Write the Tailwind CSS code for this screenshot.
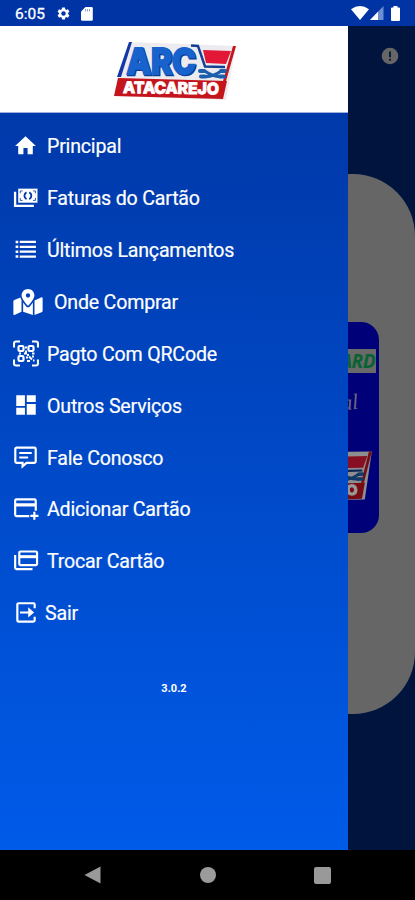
<!DOCTYPE html>
<html lang="pt-BR">
<head>
<meta charset="utf-8">
<title>ARC Atacarejo</title>
<script src="https://cdn.jsdelivr.net/npm/@tailwindcss/browser@4"></script>
</head>
<body class="bg-black">
<svg class="hidden">
  <defs>
    <symbol id="logo" viewBox="0 0 124 60">
      <path d="M16 1 L123 5 L113 59 L1 55 L5 37Z" fill="#ececf0"/>
      <path d="M16 1h3L8 36H4z" fill="#1238a8"/>
      <path d="M120 5h3L113 40h-3z" fill="#c4141c"/>
      <path d="M5 37 L114 40 L110 58 L1 55Z" fill="#c4141c"/>
      <g font-family="Inter, sans-serif" font-weight="800">
        <text x="14.500" y="34.300" font-size="35" textLength="69" lengthAdjust="spacingAndGlyphs" fill="#0a3c98" stroke="#0a3c98" stroke-width="2.500">ARC</text>
        <text x="13.500" y="32.500" font-size="35" textLength="69" lengthAdjust="spacingAndGlyphs" fill="#1762cc" stroke="#1762cc" stroke-width="2">ARC</text>
      </g>
      <path d="M90 9 L118 10 L113 23 L93 22Z" fill="#e31837"/>
      <path d="M78 4.500 L85 5 L92 25.500 L112 26" fill="none" stroke="#123f91" stroke-width="2.400"/>
      <path d="M91 29.500 Q100 36 108 35.500 M109 29.500 Q100 36 92 35.500" fill="none" stroke="#1c5fac" stroke-width="3.200"/>
      <path d="M87 30h4M108 30h4M88 35.500h4M107 35.500h4" stroke="#1c5fac" stroke-width="4" stroke-linecap="round"/>
      <text x="10" y="52" font-family="Inter, sans-serif" font-weight="800" font-size="16" textLength="96" lengthAdjust="spacingAndGlyphs" fill="#fff" stroke="#fff" stroke-width=".9" transform="rotate(.8 10 52)">ATACAREJO</text>
    </symbol>
  </defs>
</svg>
<div class="relative w-[415px] h-[900px] overflow-hidden flex flex-col bg-black font-[Roboto,sans-serif] text-white">
  <header class="h-[26px] shrink-0 bg-[#0033a3] flex items-center pl-[15px] pr-[10px]">
    <span class="text-[15.5px] leading-[26px] pt-[2px] w-[42px] [-webkit-text-stroke:0.3px_white]">6:05</span>
    <svg class="w-[15px] h-[15px] mt-[1px] -ml-px" viewBox="0 0 24 24" fill="#fff"><path d="M19.14 12.94c.04-.3.06-.61.06-.94s-.02-.64-.07-.94l2.03-1.58a.49.49 0 0 0 .12-.61l-1.92-3.32a.49.49 0 0 0-.59-.22l-2.39.96c-.5-.38-1.03-.7-1.62-.94l-.36-2.54a.48.48 0 0 0-.48-.41h-3.84c-.24 0-.43.17-.47.41l-.36 2.54c-.59.24-1.13.57-1.62.94l-2.39-.96a.48.48 0 0 0-.59.22L2.74 8.87c-.12.21-.08.47.12.61l2.03 1.58c-.05.3-.09.63-.09.94s.02.64.07.94l-2.03 1.58a.49.49 0 0 0-.12.61l1.92 3.32c.12.22.37.29.59.22l2.39-.96c.5.38 1.03.7 1.62.94l.36 2.54c.05.24.24.41.48.41h3.84c.24 0 .44-.17.47-.41l.36-2.54c.59-.24 1.13-.56 1.62-.94l2.39.96c.22.08.47 0 .59-.22l1.92-3.32a.49.49 0 0 0-.12-.61zM12 15.6a3.6 3.6 0 1 1 0-7.2 3.6 3.6 0 0 1 0 7.2z"/></svg>
    <svg class="w-[12px] h-[14px] ml-[10px] mt-px" viewBox="0 0 12 14"><path d="M4.500 0H10.500a1.300 1.300 0 0 1 1.300 1.300V12.500a1.300 1.300 0 0 1-1.300 1.300H1.300A1.300 1.300 0 0 1 0 12.500V4.500z" fill="#fff"/><path d="M4.500 2v2.500M6.500 2v2.500M8.500 2v2.500" stroke="#8da4dc"/></svg>
    <div class="grow"></div>
    <svg class="w-[18px] h-[14px]" viewBox="0 0 19 14" preserveAspectRatio="none"><path d="M0 3.200Q9.500-3 19 3.200L9.500 14z" fill="#fff"/></svg>
    <svg class="w-[14px] h-[14px] ml-[1px]" viewBox="0 0 14 14"><path d="M13.500 0v14H0z" fill="#6f8fd3"/><path d="M8 5.700V14H0z" fill="#fff"/></svg>
    <svg class="w-[9px] h-[15px] ml-[7px] mr-[5px]" viewBox="0 0 9 15"><path d="M2.500 0h4v1.500H8a1 1 0 0 1 1 1V14a1 1 0 0 1-1 1H1a1 1 0 0 1-1-1V2.500a1 1 0 0 1 1-1h1.500z" fill="#fff"/></svg>
  </header>
  <div class="flex h-[824px] shrink-0">
    <aside class="w-[348px] shrink-0 flex flex-col bg-linear-to-b from-[#0035a2] to-[#005be9]">
      <div class="h-[87px] shrink-0 bg-white border-b border-[#9faedb] flex pl-[113px] pt-[15px]">
        <svg class="w-[124px] h-[60px]"><use href="#logo"/></svg>
      </div>
      <nav class="pt-[7px] text-[19.6px] tracking-[-0.010em] leading-[26px] [-webkit-text-stroke:0.2px_white]">
        <a class="flex items-center h-[51.9px] pl-[13px]"><svg class="w-[25px] h-[25px] mr-[9px]" viewBox="0 0 24 24" fill="#fff"><path d="M10 20.500v-6h4v6h5v-8h3L12 3 2 12.500h3v8z"/></svg><span class="pt-[2.5px]">Principal</span></a>
        <a class="flex items-center h-[51.9px] pl-[13px]"><svg class="w-[25px] h-[25px] mr-[9px]" viewBox="0 0 24 24" fill="none"><path d="M5 3.500h18.500v13.500H5z" fill="#fff"/><path d="M13 7a3.700 3.700 0 0 0 0 6.600M15.600 7a3.700 3.700 0 0 1 0 6.600" stroke="#0039ac" stroke-width="1.800"/><path d="M7 8V5.700h2.200M21.500 8V5.700h-2.200M7 12.500v2.300h2.200M21.500 12.500v2.300h-2.200" stroke="#0039ac" stroke-width=".8"/><path d="M2 6.500v13.500h18" stroke="#fff" stroke-width="2.200"/></svg><span class="pt-[2.5px]">Faturas do Cartão</span></a>
        <a class="flex items-center h-[51.9px] pl-[13px]"><svg class="w-[25px] h-[25px] mr-[9px]" viewBox="0 0 24 24" fill="#fff"><path d="M2.500 3.500h2.600v2.400H2.500zM2.500 8.200h2.600v2.400H2.500zM2.500 12.900h2.600v2.400H2.500zM2.500 17.600h2.600V20H2.500zM6.500 3.600h15.500v2.200H6.500zM6.500 8.300h15.500v2.200H6.500zM6.500 13h15.500v2.200H6.500zM6.500 17.700h15.500v2.200H6.500z"/></svg><span class="pt-[2.5px]">Últimos Lançamentos</span></a>
        <a class="flex items-center h-[51.9px] pl-[13px]"><svg class="w-[30px] h-[26px] mr-[11px]" viewBox="0 0 576 512" fill="#fff"><path d="M288 0c-69.590 0-126 56.410-126 126 0 56.260 82.350 158.800 113.900 196.020 6.390 7.540 17.820 7.540 24.200 0C331.650 284.800 414 182.260 414 126 414 56.410 357.590 0 288 0zm0 168c-23.200 0-42-18.800-42-42s18.800-42 42-42 42 18.800 42 42-18.800 42-42 42zM20.120 215.950A32.006 32.006 0 0 0 0 245.660v250.320c0 11.320 11.430 19.060 21.940 14.860L160 448V214.920c-8.840-15.980-16.070-31.540-21.250-46.420zM288 359.670c-14.070 0-27.380-6.180-36.510-16.960-19.660-23.200-40.570-49.620-59.490-76.720v182l192 64V266c-18.920 27.090-39.820 53.520-59.490 76.720-9.130 10.770-22.440 16.950-36.510 16.950zm266.060-198.510L416 224v288l139.880-55.950A31.996 31.996 0 0 0 576 426.340V176.020c0-11.320-11.430-19.060-21.940-14.860z"/></svg><span class="pt-[2.5px]">Onde Comprar</span></a>
        <a class="flex items-center h-[51.9px] pl-[13px]"><svg class="w-[26px] h-[27px] mr-[8px] -mt-px" viewBox="0 0 26 26" fill="none" stroke="#fff"><path d="M1 7V3a2 2 0 0 1 2-2h4M19 1h4a2 2 0 0 1 2 2v4M1 19v4a2 2 0 0 0 2 2h4M19 25h4a2 2 0 0 0 2-2v-4" stroke-width="2.100"/><rect x="5.500" y="5.500" width="5" height="5" rx="1.200" stroke-width="2.200"/><rect x="15.500" y="5.500" width="5" height="5" rx="1.200" stroke-width="2.200"/><rect x="5.500" y="15.500" width="5" height="5" rx="1.200" stroke-width="2.200"/><path d="M13 6v2M13 10v3h-2M6 13h2M14 14.500h2M19 13h2.500M13 17h2M16 16l3 3M20 15v2M14 20.500h3M20 20h1.500" stroke-width="2"/></svg><span class="pt-[2.5px]">Pagto Com QRCode</span></a>
        <a class="flex items-center h-[51.9px] pl-[13px]"><svg class="w-[26px] h-[26px] mr-[8px]" viewBox="0 0 24 24" fill="#fff"><path d="M3 13h8V3H3zm0 8h8v-6.500H3zm9.700 0H21V11h-8.300zm0-18v6.200H21V3z"/></svg><span class="pt-[2.5px]">Outros Serviços</span></a>
        <a class="flex items-center h-[51.9px] pl-[13px]"><svg class="w-[25px] h-[25px] mr-[9px]" viewBox="0 0 24 24" fill="none" stroke="#fff" stroke-width="2.100"><path d="M3.500 2.500h17a1.300 1.300 0 0 1 1.300 1.300v12a1.300 1.300 0 0 1-1.300 1.300H13L9.200 20.500v-3.400H3.500a1.300 1.300 0 0 1-1.300-1.300v-12a1.300 1.300 0 0 1 1.300-1.300z"/><path d="M6 7.700h12M6 11.900h8.500" stroke-width="1.900"/></svg><span class="pt-[2.5px]">Fale Conosco</span></a>
        <a class="flex items-center h-[51.9px] pl-[13px]"><svg class="w-[26px] h-[26px] mr-[8px]" viewBox="0 0 24 24" fill="none" stroke="#fff" stroke-width="2"><path d="M15 18.500H3.200A1.200 1.200 0 0 1 2 17.300V4.300a1.200 1.200 0 0 1 1.200-1.200h16.600A1.200 1.200 0 0 1 21 4.300V13.500"/><path d="M2 8.200h19" stroke-width="3"/><path d="M19.700 14.500V22M16 18.300h7.500"/></svg><span class="pt-[2.5px]">Adicionar Cartão</span></a>
        <a class="flex items-center h-[51.9px] pl-[13px]"><svg class="w-[26px] h-[26px] mr-[8px]" viewBox="0 0 24 24" fill="none" stroke="#fff" stroke-width="2"><path d="M7 3.200h14a1.200 1.200 0 0 1 1.200 1.200v10.200a1.200 1.200 0 0 1-1.200 1.200H7a1.200 1.200 0 0 1-1.200-1.200V4.400A1.200 1.200 0 0 1 7 3.200z"/><path d="M6 8h16" stroke-width="2.800"/><path d="M2 6.500v11.700a1.300 1.300 0 0 0 1.300 1.300H18"/></svg><span class="pt-[2.5px]">Trocar Cartão</span></a>
        <a class="flex items-center h-[51.9px] pl-[13px]"><svg class="w-[26px] h-[26px] mr-[6px]" viewBox="0 0 24 24" fill="none" stroke="#fff" stroke-width="2"><path d="M20 7.500V4.200a1.200 1.200 0 0 0-1.200-1.200H5.200A1.200 1.200 0 0 0 4 4.200v14.600A1.200 1.200 0 0 0 5.200 20h13.600a1.200 1.200 0 0 0 1.200-1.200v-3.300M6.500 11.500h11" /><path d="M14 6.800l5.500 4.700-5.500 4.700z" fill="#fff" stroke="none"/></svg><span class="pt-[2.5px]">Sair</span></a>
      </nav>
      <p class="mt-[42px] text-center text-[11px] leading-[16px] font-bold">3.0.2</p>
    </aside>
    <main class="relative grow bg-[#00143e] border-l border-[#000c2c]/40">
      <svg class="absolute left-[32px] top-[21px] w-[18px] h-[18px]" viewBox="0 0 18 18"><circle cx="9" cy="9" r="8.300" fill="#666"/><path d="M9 4.500v5.700M9 11.700v2" stroke="#00143e" stroke-width="1.800"/></svg>
      <section class="absolute right-0 top-[148px] w-[415px] h-[540px] rounded-[62px] bg-[#666] [clip-path:inset(0_0_0_348px)]">
        <div class="absolute right-[36px] top-[148px] w-[343px] h-[211px] rounded-[18px] bg-[#000078] overflow-hidden">
          <div class="absolute right-[3px] top-[27px] w-[120px] h-[24px] bg-[#696969] text-right pr-[1px] text-[19px] tracking-[-0.5px] leading-[25px] font-bold italic text-[#086334] font-['Open_Sans',sans-serif]">CARD</div>
          <div class="absolute right-[21px] top-[71px] text-[22px] leading-[24px] italic text-[#686880] font-['Liberation_Serif',serif] -rotate-6">Digital</div>
          <svg class="absolute right-[5px] top-[128px] w-[118px] h-[53px] brightness-[.6] -rotate-3" viewBox="0 0 124 60" preserveAspectRatio="none"><use href="#logo" width="124" height="60"/></svg>
        </div>
      </section>
    </main>
  </div>
  <footer class="h-[50px] shrink-0 bg-black flex items-center justify-between pl-[84px] pr-[84px]">
    <svg class="w-[17px] h-[18px]" viewBox="0 0 17 18"><path d="M16.500.500v17L.500 9z" fill="#999"/></svg>
    <span class="w-[16px] h-[16px] rounded-full bg-[#9b9b9b]"></span>
    <span class="w-[17px] h-[17px] rounded-[2px] bg-[#999]"></span>
  </footer>
</div>
</body>
</html>
